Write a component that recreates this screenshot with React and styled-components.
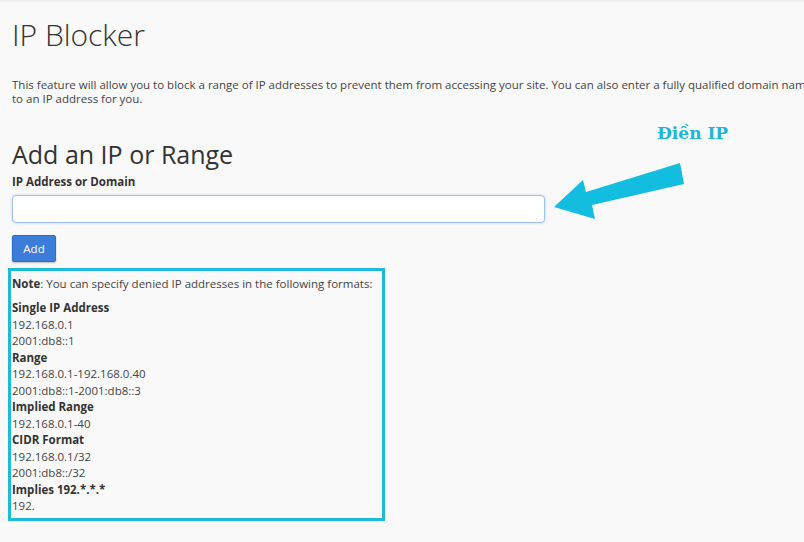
import React from "react";
import styled, { createGlobalStyle } from "styled-components";

const GlobalStyle = createGlobalStyle`
  html, body {
    margin: 0;
    padding: 0;
    background: #f9f9f9;
    overflow: hidden;
  }
  body {
    font-family: "Open Sans", "Liberation Sans", sans-serif;
    color: #333;
  }
`;

const formats = [
    { title: "Single IP Address", items: ["192.168.0.1", "2001:db8::1"] },
    { title: "Range", items: ["192.168.0.1-192.168.0.40", "2001:db8::1-2001:db8::3"] },
    { title: "Implied Range", items: ["192.168.0.1-40"] },
    { title: "CIDR Format", items: ["192.168.0.1/32", "2001:db8::/32"] },
    { title: "Implies 192.*.*.*", items: ["192."] },
];

const App = () => {
    return (
        <Page>
            <GlobalStyle />
            <TopShade />
            <Content>
                <Title>IP Blocker</Title>
                <Description>
                    This feature will allow you to block a range of IP addresses to prevent them from
                    accessing your site. You can also enter a fully qualified domain name, and the IP
                    Blocker will attempt to resolve it
                    <br />
                    to an IP address for you.
                </Description>
                <SubTitle>Add an IP or Range</SubTitle>
                <Label>IP Address or Domain</Label>
                <Input type="text" />
                <Button>Add</Button>
                <NoteBox>
                    <NoteLine>
                        <strong>Note</strong>: You can specify denied IP addresses in the following
                        formats:
                    </NoteLine>
                    {formats.map((f) => (
                        <React.Fragment key={f.title}>
                            <FormatTitle>{f.title}</FormatTitle>
                            {f.items.map((i) => (
                                <FormatItem key={i}>{i}</FormatItem>
                            ))}
                        </React.Fragment>
                    ))}
                </NoteBox>
            </Content>

            <Hint>Điền IP</Hint>
            <Arrow width="804" height="542" viewBox="0 0 804 542">
                <polygon
                    points="554,207 583,180 586,192 680,163 684,184 592,205 595,219"
                    fill="#12bde0"
                />
            </Arrow>
        </Page>
    );
};

export default App;

const Page = styled.div`
    position: relative;
    width: 804px;
    height: 542px;
    overflow: hidden;
`;

const TopShade = styled.div`
    height: 3px;
    background: linear-gradient(#ececec, #f9f9f9);
`;

const Content = styled.div`
    padding: 0 12px;
    display: flex;
    flex-direction: column;
    align-items: flex-start;
`;

const Title = styled.h1`
    margin: 12px 0 0;
    font-size: 30px;
    line-height: 40px;
    font-weight: 300;
    color: #333;
`;

const Description = styled.p`
    margin: 23px 0 0;
    font-size: 11.5px;
    line-height: 14px;
    color: #444;
    white-space: nowrap;
`;

const SubTitle = styled.h2`
    margin: 33px 0 0;
    font-size: 25px;
    line-height: 30px;
    font-weight: 400;
    color: #333;
`;

const Label = styled.label`
    margin-top: 5px;
    font-size: 11.5px;
    line-height: 16px;
    font-weight: 700;
    color: #333;
`;

const Input = styled.input`
    box-sizing: border-box;
    margin-top: 5px;
    width: 533px;
    height: 28px;
    border: 1px solid #9fc1ea;
    border-radius: 4px;
    background: #fff;
    box-shadow: 0 0 3px rgba(80, 140, 220, 0.35);
    outline: none;
`;

const Button = styled.button`
    margin-top: 12px;
    width: 44px;
    height: 27px;
    border: 1px solid #2f6cc3;
    border-radius: 2px;
    background: #3b7dd8;
    color: #fff;
    font-family: "Open Sans", "Liberation Sans", sans-serif;
    font-size: 11.5px;
    padding: 0;
    box-shadow: 0 1px 2px rgba(0, 0, 0, 0.25);
`;

const NoteBox = styled.div`
    box-sizing: border-box;
    margin: 6px 0 0 -4px;
    width: 377px;
    padding: 5px 2px 3px 1px;
    border: 3px solid #1cbbd8;
    font-size: 11.5px;
    color: #444;
`;

const NoteLine = styled.div`
    line-height: 16px;
    margin-bottom: 8px;
    white-space: nowrap;
    strong {
        color: #333;
    }
`;

const FormatTitle = styled.div`
    line-height: 16.5px;
    font-weight: 700;
    color: #333;
`;

const FormatItem = styled.div`
    line-height: 16.5px;
`;

const Hint = styled.div`
    position: absolute;
    left: 657px;
    top: 123px;
    font-family: "DejaVu Serif", "Liberation Serif", serif;
    font-weight: 700;
    font-size: 17px;
    color: #1cb6d6;
`;

const Arrow = styled.svg`
    position: absolute;
    left: 0;
    top: 0;
    pointer-events: none;
`;
